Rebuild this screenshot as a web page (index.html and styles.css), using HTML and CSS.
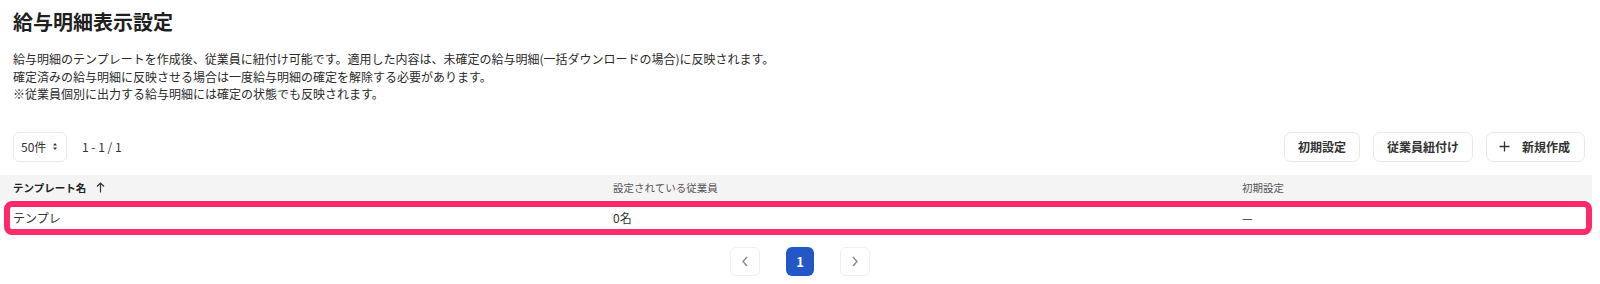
FILE: index.html
```html
<!DOCTYPE html>
<html lang="ja">
<head>
<meta charset="utf-8">
<title>給与明細表示設定</title>
<link rel="stylesheet" href="styles.css">
</head>
<body>
<div class="page">
  <h1 class="title">給与明細表示設定</h1>
  <div class="desc">
    <p>給与明細のテンプレートを作成後、従業員に紐付け可能です。適用した内容は、未確定の給与明細(一括ダウンロードの場合)に反映されます。</p>
    <p>確定済みの給与明細に反映させる場合は一度給与明細の確定を解除する必要があります。</p>
    <p>※従業員個別に出力する給与明細には確定の状態でも反映されます。</p>
  </div>

  <div class="toolbar">
    <div class="left">
      <div class="select">
        <span>50件</span>
        <svg class="updown" width="6" height="9" viewBox="0 0 6 9"><path d="M1 3.5 L3 1 L5 3.5 Z M1 5.5 L3 8 L5 5.5 Z" fill="#333"/></svg>
      </div>
      <span class="range">1 - 1 / 1</span>
    </div>
    <div class="right">
      <button class="btn">初期設定</button>
      <button class="btn">従業員紐付け</button>
      <button class="btn btn-new"><svg width="11" height="11" viewBox="0 0 11 11"><path d="M5.5 0.5 V10.5 M0.5 5.5 H10.5" stroke="#333" stroke-width="1.3"/></svg><span>新規作成</span></button>
    </div>
  </div>

  <div class="table">
    <div class="thead">
      <div class="cell strong">テンプレート名<svg class="sort" width="9" height="11" viewBox="0 0 9 11"><path d="M4.5 10.5 V1.2 M1 4.5 L4.5 1 L8 4.5" fill="none" stroke="#333" stroke-width="1.2"/></svg></div>
      <div class="cell">設定されている従業員</div>
      <div class="cell">初期設定</div>
    </div>
    <div class="row">
      <div class="cell">テンプレ</div>
      <div class="cell">0名</div>
      <div class="cell">—</div>
    </div>
  </div>

  <div class="pager">
    <button class="pg pg-nav"><svg width="8" height="11" viewBox="0 0 8 11"><path d="M6 1 L2 5.5 L6 10" fill="none" stroke="#8a8a8a" stroke-width="1.4"/></svg></button>
    <button class="pg pg-cur">1</button>
    <button class="pg pg-nav"><svg width="8" height="11" viewBox="0 0 8 11"><path d="M2 1 L6 5.5 L2 10" fill="none" stroke="#8a8a8a" stroke-width="1.4"/></svg></button>
  </div>
</div>
</body>
</html>
```

FILE: styles.css
```css
* { box-sizing: border-box; }
html, body { margin: 0; padding: 0; background: #fff; }
body {
  font-family: "Noto Sans CJK JP", "Noto Sans", sans-serif;
  color: #222;
  width: 1600px;
  height: 284px;
  overflow: hidden;
}
.page { width: 1600px; }

.title {
  margin: 0;
  padding: 8px 13px 0;
  font-size: 20px;
  line-height: 28px;
  font-weight: 700;
  color: #1f1f1f;
}

.desc {
  margin-top: 14px;
  padding: 0 13px;
  font-size: 12px;
  line-height: 17.5px;
  color: #2a2a2a;
}
.desc p { margin: 0; }

.toolbar {
  margin-top: 29px;
  height: 30px;
  padding: 0 15px 0 13px;
  display: flex;
  align-items: center;
  justify-content: space-between;
}
.left { display: flex; align-items: center; gap: 15px; }
.select {
  width: 54px;
  height: 30px;
  border: 1px solid #ececec;
  border-radius: 6px;
  display: flex;
  align-items: center;
  justify-content: space-between;
  padding: 0 8px 0 7px;
  font-size: 12px;
  color: #333;
}
.range { font-size: 12px; color: #333; }

.right { display: flex; gap: 13px; }
.btn {
  height: 30px;
  padding: 0 13px;
  border: 1px solid #e9e9e9;
  border-radius: 7px;
  background: #fff;
  font-family: inherit;
  font-size: 12px;
  font-weight: 700;
  color: #333;
  display: flex;
  align-items: center;
  gap: 12px;
}
.btn-new { padding-left: 12px; padding-right: 14px; }

.table { margin-top: 13px; }
.thead, .row {
  display: grid;
  grid-template-columns: 600px 629px 1fr;
  align-items: center;
}
.thead {
  height: 25px;
  background: #f5f4f5;
  font-size: 10.5px;
  color: #555;
  margin-right: 8px;
}
.thead .cell { padding-left: 13px; display: flex; align-items: center; }
.thead .strong { font-weight: 700; color: #222; }
.sort { margin-left: 10px; }

.row {
  position: relative;
  height: 36px;
  font-size: 12px;
  color: #333;
}
.row .cell { padding-left: 13px; }
.row::after {
  content: "";
  position: absolute;
  left: 4px;
  right: 8px;
  top: 1px;
  bottom: 1px;
  border: 6px solid #ff2a6a;
  border-radius: 8px;
  pointer-events: none;
}

.pager {
  margin-top: 11px;
  display: flex;
  justify-content: center;
  gap: 26px;
}
.pg {
  width: 30px;
  height: 29px;
  border-radius: 6px;
  font-family: inherit;
  display: flex;
  align-items: center;
  justify-content: center;
  padding: 0;
}
.pg-nav { background: #fff; border: 1px solid #f0f0f0; }
.pg-cur {
  width: 28px;
  background: #2457c5;
  border: none;
  color: #fff;
  font-weight: 700;
  font-size: 13px;
}
```
